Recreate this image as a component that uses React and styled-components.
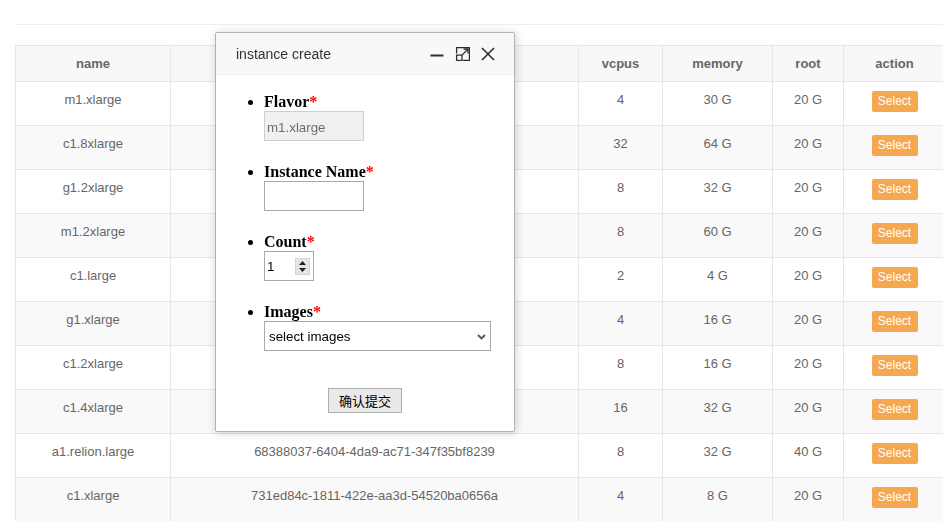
import React from "react";
import styled, { createGlobalStyle } from "styled-components";

const Global = createGlobalStyle`
  html, body { margin: 0; padding: 0; overflow: hidden; background: #fff; }
  body { font-family: "Liberation Sans", Arial, sans-serif; }
`;

const Page = styled.div`
  padding: 0 0 0 15px;
  width: 930px;
`;

const TopBar = styled.div`
  height: 24px;
  border-bottom: 1px solid #eee;
  margin-bottom: 20px;
`;

const Table = styled.table`
  border-collapse: collapse;
  table-layout: fixed;
  width: 930px;
  font-size: 13px;
  color: #666;
`;

const Th = styled.th`
  height: 36px;
  box-sizing: border-box;
  padding: 0 10px;
  background: #f8f8f8;
  border: 1px solid #e6e6e6;
  font-weight: bold;
  text-align: center;
  vertical-align: middle;
  line-height: 20px;
`;

const Tr = styled.tr`
  background: ${(p) => (p.$striped ? "#f9f9f9" : "#fff")};
`;

const Td = styled.td`
  height: 44px;
  box-sizing: border-box;
  padding: 8px 10px 0;
  border: 1px solid #e6e6e6;
  text-align: center;
  vertical-align: top;
  line-height: 20px;
  white-space: nowrap;
`;

const SelectBtn = styled.button`
  display: inline-block;
  margin-top: 1px;
  width: 46px;
  height: 21px;
  padding: 0;
  border: none;
  border-radius: 2px;
  background: #f7a74f;
  color: #fff;
  font-family: "Liberation Sans", Arial, sans-serif;
  font-size: 12px;
  line-height: 21px;
  cursor: pointer;
  vertical-align: top;
`;

const Dialog = styled.div`
  position: fixed;
  left: 215px;
  top: 32px;
  width: 300px;
  height: 400px;
  box-sizing: border-box;
  background: #fff;
  border: 1px solid #b2b2b2;
  border-radius: 2px;
  box-shadow: 1px 1px 10px rgba(0, 0, 0, 0.18);
`;

const TitleBar = styled.div`
  height: 42px;
  box-sizing: border-box;
  display: flex;
  align-items: center;
  justify-content: space-between;
  padding: 0 19px 0 20px;
  background: #f8f8f8;
  border-bottom: 1px solid #eee;
  font-family: "Liberation Sans", Arial, sans-serif;
  font-size: 14px;
  color: #333;
`;

const Tools = styled.div`
  display: flex;
  align-items: center;
  gap: 11px;
`;

const ToolIcon = styled.svg`
  display: block;
  width: ${(p) => p.$size || 14}px;
  height: ${(p) => p.$size || 14}px;
  color: #2e2e2e;
`;

const List = styled.ul`
  margin: 17px 0 0;
  padding: 0 0 0 48px;
  list-style: disc;
  font-family: "Liberation Serif", "Times New Roman", serif;
`;

const Item = styled.li`
  margin-bottom: 21px;
`;

const Label = styled.div`
  font-weight: bold;
  font-size: 16px;
  line-height: 19px;
  color: #000;
`;

const Star = styled.span`
  color: #f00;
`;

const TextInput = styled.input`
  display: block;
  box-sizing: border-box;
  width: ${(p) => p.$w || 100}px;
  height: 30px;
  margin: 0;
  padding: 2px 2px 0;
  border: 1px solid ${(p) => (p.disabled ? "#cfcfcf" : "#a9a9a9")};
  background: ${(p) => (p.disabled ? "#f0f0f0" : "#fff")};
  color: ${(p) => (p.disabled ? "#6d6d6d" : "#000")};
  font-family: "Liberation Sans", Arial, sans-serif;
  font-size: 13.33px;
  outline: none;
`;

const NumberBox = styled.div`
  box-sizing: border-box;
  width: 50px;
  height: 30px;
  border: 1px solid #a9a9a9;
  display: flex;
  align-items: center;
  justify-content: space-between;
  padding: 1px 3px 0 2px;
  font-family: "Liberation Sans", Arial, sans-serif;
  font-size: 13.33px;
  color: #000;
`;

const Spinner = styled.div`
  width: 15px;
  height: 17px;
  box-sizing: border-box;
  background: #e6e6e6;
  border: 1px solid #d4d4d4;
  display: flex;
  flex-direction: column;
  align-items: center;
  justify-content: space-around;
`;

const SelectBox = styled.div`
  box-sizing: border-box;
  width: 227px;
  height: 30px;
  border: 1px solid #a9a9a9;
  display: flex;
  align-items: center;
  justify-content: space-between;
  padding: 1px 4px 0 4px;
  font-family: "Liberation Sans", Arial, sans-serif;
  font-size: 13.33px;
  color: #000;
`;

const Footer = styled.div`
  display: flex;
  justify-content: center;
  padding-top: 16px;
`;

const SubmitBtn = styled.button`
  width: 74px;
  height: 25px;
  padding: 0;
  border: 1px solid #adadad;
  background: #e9e9e9;
  color: #000;
  font-family: "Noto Sans CJK SC", sans-serif;
  font-size: 13px;
  line-height: 23px;
`;

const rows = [
  ["m1.xlarge", "", "4", "30 G", "20 G"],
  ["c1.8xlarge", "", "32", "64 G", "20 G"],
  ["g1.2xlarge", "", "8", "32 G", "20 G"],
  ["m1.2xlarge", "", "8", "60 G", "20 G"],
  ["c1.large", "", "2", "4 G", "20 G"],
  ["g1.xlarge", "", "4", "16 G", "20 G"],
  ["c1.2xlarge", "", "8", "16 G", "20 G"],
  ["c1.4xlarge", "", "16", "32 G", "20 G"],
  ["a1.relion.large", "68388037-6404-4da9-ac71-347f35bf8239", "8", "32 G", "40 G"],
  ["c1.xlarge", "731ed84c-1811-422e-aa3d-54520ba0656a", "4", "8 G", "20 G"],
];

const widths = [155, 408, 84, 110, 71, 102];
const heads = ["name", "", "vcpus", "memory", "root", "action"];

export default function App() {
  return (
    <>
      <Global />
      <Page>
        <TopBar />
        <Table>
          <colgroup>
            {widths.map((w, i) => (
              <col key={i} style={{ width: w }} />
            ))}
          </colgroup>
          <thead>
            <tr>
              {heads.map((h, i) => (
                <Th key={i}>{h}</Th>
              ))}
            </tr>
          </thead>
          <tbody>
            {rows.map((r, i) => (
              <Tr key={r[0]} $striped={i % 2 === 1}>
                {r.map((c, j) => (
                  <Td key={j}>{c}</Td>
                ))}
                <Td>
                  <SelectBtn>Select</SelectBtn>
                </Td>
              </Tr>
            ))}
          </tbody>
        </Table>
      </Page>

      <Dialog>
        <TitleBar>
          <span>instance create</span>
          <Tools>
            <ToolIcon viewBox="0 0 14 14">
              <path d="M0.5 8.5H13.5" stroke="currentColor" strokeWidth="2" fill="none" />
            </ToolIcon>
            <ToolIcon viewBox="0 0 14 14" $size={15}>
              <path d="M1.5 7V1.5H13.5V13.5H7.5" stroke="currentColor" strokeWidth="1.2" fill="none" />
              <rect x="1.5" y="8.5" width="5" height="5" stroke="currentColor" strokeWidth="1.2" fill="none" />
              <path d="M6.5 8.5L12 3M8 2.8H12.2V7" stroke="currentColor" strokeWidth="1.2" fill="none" />
            </ToolIcon>
            <ToolIcon viewBox="0 0 14 14">
              <path d="M1 1L13 13M13 1L1 13" stroke="currentColor" strokeWidth="1.6" fill="none" />
            </ToolIcon>
          </Tools>
        </TitleBar>
        <List>
          <Item>
            <Label>
              Flavor<Star>*</Star>
            </Label>
            <TextInput disabled value="m1.xlarge" readOnly />
          </Item>
          <Item>
            <Label>
              Instance Name<Star>*</Star>
            </Label>
            <TextInput defaultValue="" />
          </Item>
          <Item>
            <Label>
              Count<Star>*</Star>
            </Label>
            <NumberBox>
              <span>1</span>
              <Spinner>
                <svg width="7" height="4" viewBox="0 0 7 4">
                  <path d="M0 4L3.5 0L7 4Z" fill="#222" />
                </svg>
                <svg width="7" height="4" viewBox="0 0 7 4">
                  <path d="M0 0L3.5 4L7 0Z" fill="#222" />
                </svg>
              </Spinner>
            </NumberBox>
          </Item>
          <Item>
            <Label>
              Images<Star>*</Star>
            </Label>
            <SelectBox>
              <span>select images</span>
              <svg width="9" height="6" viewBox="0 0 9 6">
                <path d="M1 1L4.5 4.5L8 1" stroke="#555" strokeWidth="1.8" fill="none" />
              </svg>
            </SelectBox>
          </Item>
        </List>
        <Footer>
          <SubmitBtn>确认提交</SubmitBtn>
        </Footer>
      </Dialog>
    </>
  );
}
